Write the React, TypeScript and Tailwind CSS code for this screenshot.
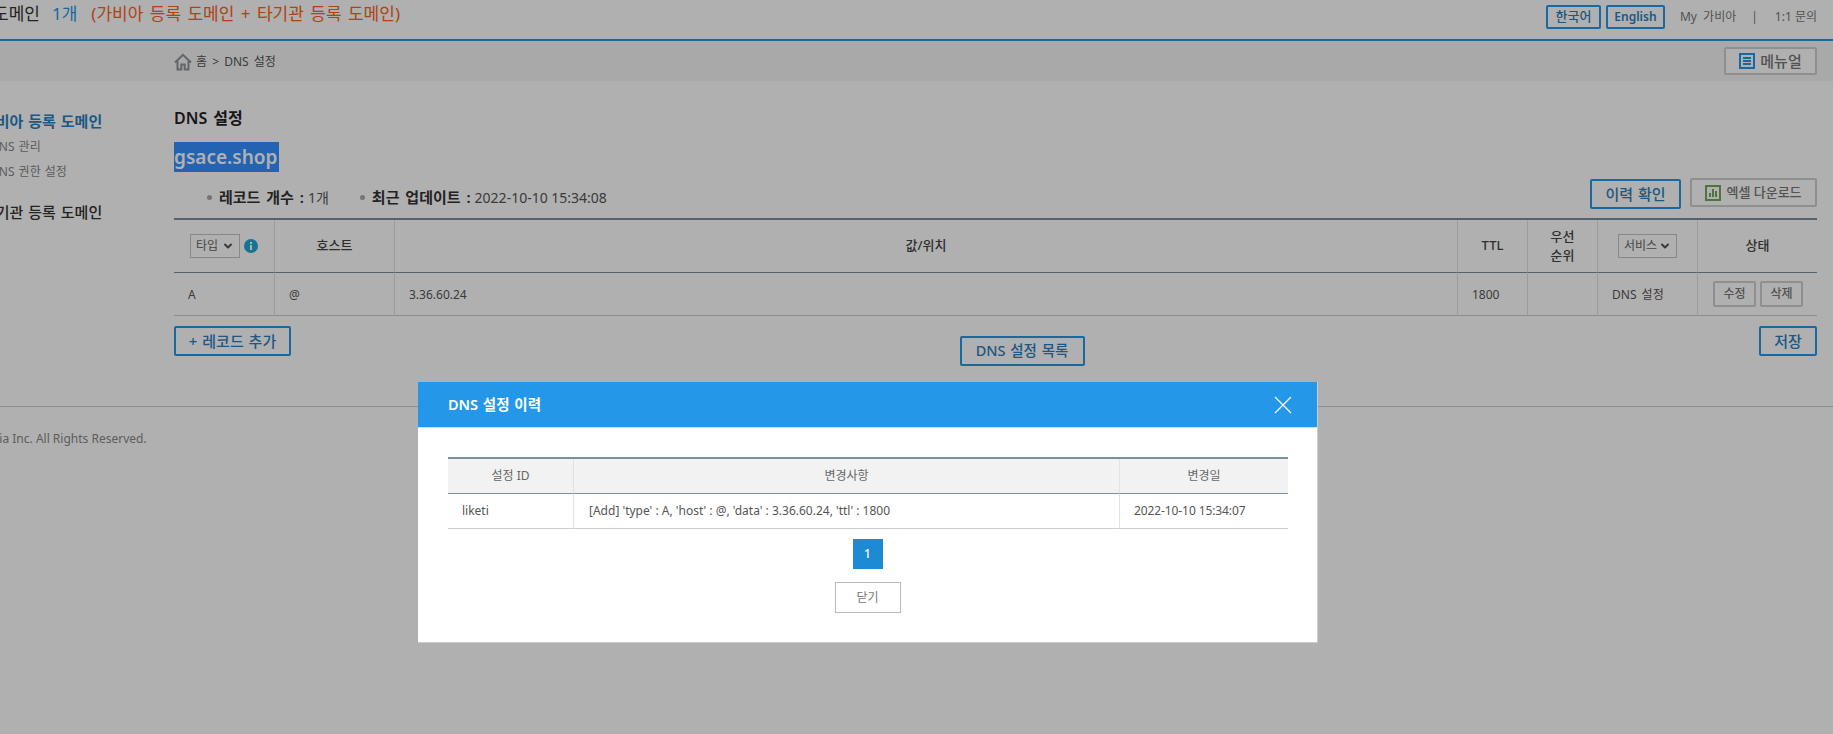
import React from 'react';
import { ChevronDown } from 'lucide-react';

function Select({ label, className }: { label: string; className: string }) {
  return (
    <div className={`inline-flex items-center justify-between h-[24px] border border-[#c4c4c4] px-[5px] text-[12px] font-normal text-[#666] ${className}`}>
      <span>{label}</span>
      <ChevronDown size={12} strokeWidth={4} className="text-[#555]" />
    </div>
  );
}

function InfoIcon() {
  return (
    <svg width="14" height="14" viewBox="0 0 14 14" className="shrink-0">
      <circle cx="7" cy="7" r="7" fill="#20a8d8" />
      <rect x="6" y="6" width="2" height="5" fill="#fff" />
      <rect x="6" y="3" width="2" height="2" fill="#fff" />
    </svg>
  );
}

function HomeIcon() {
  return (
    <svg width="18" height="18" viewBox="0 0 18 18" fill="none" stroke="#8f949a" strokeWidth="2">
      <path d="M1 9.5 9 1.8l8 7.7" />
      <path d="M3.5 8v8.6h3.8v-5h3.4v5h3.8V8" />
    </svg>
  );
}

function ManualIcon() {
  return (
    <svg width="16" height="16" viewBox="0 0 16 16">
      <rect x="1" y="1" width="14" height="14" fill="none" stroke="#2597e8" strokeWidth="2" />
      <rect x="4" y="4" width="8" height="2" fill="#2597e8" />
      <rect x="4" y="7" width="8" height="2" fill="#2597e8" />
      <rect x="4" y="10" width="8" height="2" fill="#2597e8" />
    </svg>
  );
}

function ExcelIcon() {
  return (
    <svg width="16" height="16" viewBox="0 0 16 16">
      <rect x="1" y="1" width="14" height="14" fill="none" stroke="#77a75c" strokeWidth="2" />
      <rect x="4" y="8" width="2" height="4" fill="#77a75c" />
      <rect x="7" y="4" width="2" height="8" fill="#77a75c" />
      <rect x="10" y="6" width="2" height="6" fill="#77a75c" />
    </svg>
  );
}

function CloseIcon() {
  return (
    <svg width="18" height="18" viewBox="0 0 18 18" fill="none" stroke="#fff" strokeWidth="1.1">
      <path d="M1 1l16 16M17 1 1 17" />
    </svg>
  );
}

export default function App() {
  const blueBtn = 'border-2 border-[#2597e8] rounded-[2px] bg-white text-[#2b7fc0] font-medium flex items-center justify-center [word-spacing:1px]';
  const grayBtn = 'border-2 border-[#d0d0d0] rounded-[2px] bg-white text-[#777] font-medium flex items-center justify-center';
  const th = 'border-r border-[#e2e2e2] border-b border-b-[#7a8fa0] text-[13px] font-medium text-[#444] text-center align-middle';
  const modalTh = 'border-r border-[#e2e2e2] border-b border-b-[#7a8fa0] text-[12px] font-normal text-[#666] text-center align-middle';
  const td = 'border-r border-[#e2e2e2] border-b border-b-[#ccc] text-[12px] text-[#555] align-middle';
  const cell = `${td} pl-[14px] pt-[2px]`;

  return (
    <div className="relative w-[1833px] h-[734px] overflow-hidden bg-white font-['Noto_Sans','Noto_Sans_CJK_KR',sans-serif]">
      <header className="h-[41px] border-b-2 border-[#2597e8] flex justify-between items-start">
        <div className="flex text-[17px] leading-[27px] -ml-[7px] [word-spacing:2px]">
          <span className="text-[#333]">도메인</span>
          <span className="ml-[12px] text-[#2597e8]">1개</span>
          <span className="ml-[14px] text-[#f9641e]">(가비아 등록 도메인 + 타기관 등록 도메인)</span>
        </div>
        <div className="flex items-center pt-[5px] pr-[16px] text-[12px]">
          <button className={`${blueBtn} w-[55px] h-[24px] text-[13px]`}>한국어</button>
          <button className={`${blueBtn} w-[59px] h-[24px] ml-[5px] text-[12px] font-semibold`}>English</button>
          <span className="ml-[15px] text-[#777] [word-spacing:3px]">My 가비아</span>
          <span className="ml-[15px] text-[#777]">|</span>
          <span className="ml-[17px] text-[#777]">1:1 문의</span>
        </div>
      </header>

      <div className="h-[40px] bg-[#f5f5f5] flex items-center justify-between pl-[174px] pr-[16px]">
        <div className="flex items-center gap-[4px] pt-[1px] text-[12px] text-[#555] [word-spacing:2px]">
          <HomeIcon />
          <span>홈 &gt; DNS 설정</span>
        </div>
        <button className={`${grayBtn} w-[93px] h-[28px] gap-[5px] text-[15px]`}>
          <ManualIcon />
          메뉴얼
        </button>
      </div>

      <div className="flex -ml-[28px] pr-[16px]">
        <aside className="w-[202px] shrink-0 pl-[10px] pt-[30px]">
          <div className="text-[15px] leading-[20px] font-semibold text-[#2b7fc0] [word-spacing:1px]">가비아 등록 도메인</div>
          <div className="mt-[3px] pl-[8px] text-[12px] leading-[25px] text-[#888] [word-spacing:1px]">
            <div>DNS 관리</div>
            <div>DNS 권한 설정</div>
          </div>
          <div className="mt-[18px] text-[15px] leading-[20px] font-medium text-[#333] [word-spacing:1px]">타기관 등록 도메인</div>
        </aside>

        <main className="flex-1 min-w-0">
          <h2 className="mt-[26px] text-[16px] leading-[22px] font-semibold text-[#222] [word-spacing:2px]">DNS 설정</h2>
          <div className="mt-[13px] w-[105px] h-[30px] bg-[#3390ff] text-white text-[19px] leading-[30px] font-semibold whitespace-nowrap">gsace.shop</div>

          <div className="h-[46px] flex justify-between items-start">
            <div className="flex items-center h-[38px] mt-[6px] pl-[33px] text-[14px] text-[#555]">
              <span className="w-[5px] h-[5px] rounded-full bg-[#aaa]" />
              <span className="ml-[7px] text-[15px] font-semibold text-[#333] [word-spacing:2px]">레코드 개수 :</span>
              <span className="ml-[4px]">1개</span>
              <span className="ml-[31px] w-[5px] h-[5px] rounded-full bg-[#aaa]" />
              <span className="ml-[7px] text-[15px] font-semibold text-[#333] [word-spacing:2px]">최근 업데이트 :</span>
              <span className="ml-[4px]">2022-10-10 15:34:08</span>
            </div>
            <div className="flex items-start pt-[7px] gap-[9px]">
              <button className={`${blueBtn} w-[91px] h-[30px] text-[15px]`}>이력 확인</button>
              <button className={`${grayBtn} w-[127px] h-[29px] -mt-[1px] gap-[5px] text-[13px]`}>
                <ExcelIcon />
                엑셀 다운로드
              </button>
            </div>
          </div>

          <table className="w-[1643px] table-fixed border-separate border-spacing-0 border-t-2 border-[#7a8fa0]">
            <colgroup>
              <col className="w-[101px]" />
              <col className="w-[120px]" />
              <col className="w-[1063px]" />
              <col className="w-[70px]" />
              <col className="w-[70px]" />
              <col className="w-[100px]" />
              <col className="w-[119px]" />
            </colgroup>
            <thead>
              <tr className="h-[53px]">
                <th className={th}>
                  <div className="flex items-center pl-[16px] gap-[4px]">
                    <Select label="타입" className="w-[50px]" />
                    <InfoIcon />
                  </div>
                </th>
                <th className={th}>호스트</th>
                <th className={th}>값/위치</th>
                <th className={th}>TTL</th>
                <th className={`${th} leading-[19px]`}>우선<br />순위</th>
                <th className={th}>
                  <Select label="서비스" className="w-[59px]" />
                </th>
                <th className={`${th} border-r-0`}>상태</th>
              </tr>
            </thead>
            <tbody>
              <tr className="h-[43px]">
                <td className={cell}>A</td>
                <td className={cell}>@</td>
                <td className={cell}>3.36.60.24</td>
                <td className={cell}>1800</td>
                <td className={td} />
                <td className={`${cell} [word-spacing:2px]`}>DNS 설정</td>
                <td className={`${td} border-r-0`}>
                  <div className="flex pl-[15px] gap-[4px]">
                    <button className={`${grayBtn} w-[43px] h-[26px] text-[12px]`}>수정</button>
                    <button className={`${grayBtn} w-[43px] h-[26px] text-[12px]`}>삭제</button>
                  </div>
                </td>
              </tr>
            </tbody>
          </table>

          <div className="mt-[10px] flex justify-between items-start">
            <button className={`${blueBtn} w-[117px] h-[30px] text-[15px]`}>+ 레코드 추가</button>
            <button className={`${blueBtn} w-[125px] h-[30px] mt-[10px] mr-[6px] text-[14.5px]`}>DNS 설정 목록</button>
            <button className={`${blueBtn} w-[58px] h-[30px] text-[15px]`}>저장</button>
          </div>
        </main>
      </div>

      <footer className="mt-[40px] border-t border-[#ccc] pt-[23px] text-[12px] leading-[18px] text-[#888]">
        <div className="-ml-[99px] pl-[4px] whitespace-nowrap">Copyright © Gabia Inc. All Rights Reserved.</div>
      </footer>

      {/* dimmed page + history popup */}
      <div className="absolute inset-0 bg-black/[0.31]" />
      <div className="absolute left-[418px] top-[382px] w-[900px] h-[261px] bg-white border-r border-b border-[#ccc]">
        <div className="h-[46px] bg-[#2597e8] border-b border-[#ddd] pl-[30px] pr-[25px] flex items-center justify-between">
          <span className="text-[14.5px] font-semibold text-white [word-spacing:1px]">DNS 설정 이력</span>
          <CloseIcon />
        </div>
        <div className="pt-[29px] px-[30px]">
          <table className="w-[840px] table-fixed border-separate border-spacing-0 border-t-2 border-[#7a8fa0]">
            <colgroup>
              <col className="w-[126px]" />
              <col className="w-[546px]" />
              <col className="w-[168px]" />
            </colgroup>
            <thead>
              <tr className="h-[35px] bg-[#f2f2f2]">
                <th className={modalTh}>설정 ID</th>
                <th className={modalTh}>변경사항</th>
                <th className={`${modalTh} border-r-0`}>변경일</th>
              </tr>
            </thead>
            <tbody>
              <tr className="h-[35px]">
                <td className={`${td} pl-[14px]`}>liketi</td>
                <td className={`${td} pl-[15px]`}>[Add] 'type' : A, 'host' : @, 'data' : 3.36.60.24, 'ttl' : 1800</td>
                <td className={`${td} pl-[14px] border-r-0 tracking-[-0.1px]`}>2022-10-10 15:34:07</td>
              </tr>
            </tbody>
          </table>
          <div className="mt-[10px] flex justify-center">
            <span className="w-[30px] h-[30px] bg-[#1e8ad6] text-white text-[12px] font-medium flex items-center justify-center">1</span>
          </div>
          <div className="mt-[13px] flex justify-center">
            <button className="w-[66px] h-[31px] border border-[#bbb] bg-white text-[12px] text-[#777]">닫기</button>
          </div>
        </div>
      </div>
    </div>
  );
}
